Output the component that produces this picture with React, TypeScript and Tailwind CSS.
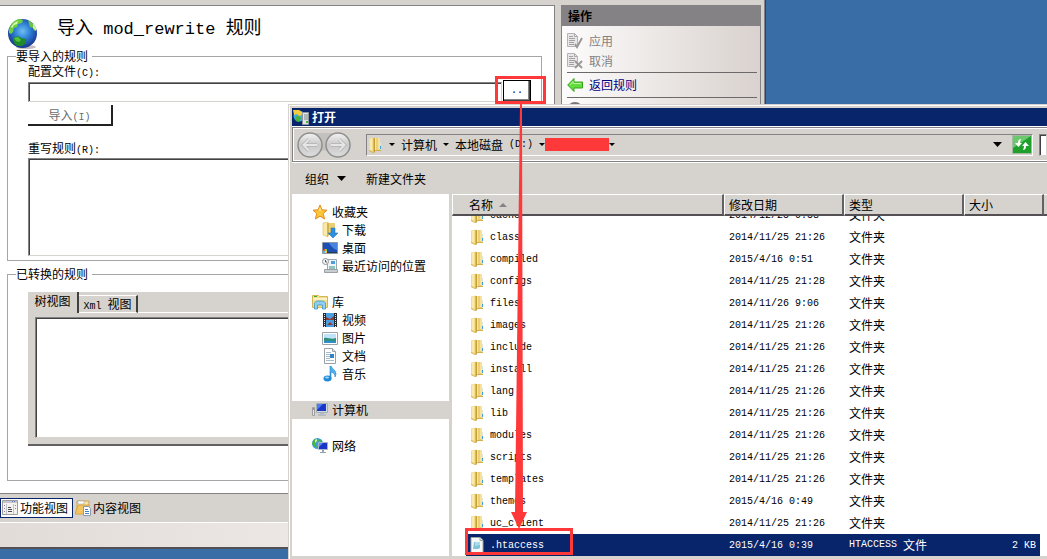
import React from 'react';
import clsx from 'clsx';

const MONO = "font-['Liberation_Mono','Noto_Sans_CJK_SC',monospace]";

const SUNKEN =
  'border border-t-[#848284] border-l-[#848284] border-r-[#d6d3ce] border-b-[#d6d3ce] shadow-[inset_1px_1px_0_#424142]';

interface FileRow {
  name: string;
  date: string;
  selected?: boolean;
}

const FILES: FileRow[] = [
  { name: 'cache', date: '2014/12/25 0:58' },
  { name: 'class', date: '2014/11/25 21:26' },
  { name: 'compiled', date: '2015/4/16 0:51' },
  { name: 'configs', date: '2014/11/25 21:28' },
  { name: 'files', date: '2014/11/26 9:06' },
  { name: 'images', date: '2014/11/25 21:26' },
  { name: 'include', date: '2014/11/25 21:26' },
  { name: 'install', date: '2014/11/25 21:26' },
  { name: 'lang', date: '2014/11/25 21:26' },
  { name: 'lib', date: '2014/11/25 21:26' },
  { name: 'modules', date: '2014/11/25 21:26' },
  { name: 'scripts', date: '2014/11/25 21:26' },
  { name: 'templates', date: '2014/11/25 21:26' },
  { name: 'themes', date: '2015/4/16 0:49' },
  { name: 'uc_client', date: '2014/11/25 21:26' },
  { name: '.htaccess', date: '2015/4/16 0:39', selected: true },
];

// Latin text is set smaller so that two letters fill one Chinese character
const Latin: React.FC<{ children: React.ReactNode }> = ({ children }) => (
  <span className={clsx(MONO, 'text-[10px] leading-none whitespace-pre')}>{children}</span>
);

const Caret: React.FC<{ big?: boolean }> = ({ big }) => (
  <svg width={big ? 9 : 6} height={big ? 5 : 3} viewBox="0 0 8 4" preserveAspectRatio="none" className="shrink-0">
    <path d="M0 0h8L4 4z" fill="#000" />
  </svg>
);

/* ---------- Icons ---------- */

const GlobeIcon = () => (
  <svg width="30" height="32" viewBox="0 0 30 32" className="shrink-0">
    <defs>
      <radialGradient id="sea" cx="0.5" cy="0.42" r="0.6">
        <stop offset="0" stopColor="#6fbff2" />
        <stop offset="0.45" stopColor="#2f7fd6" />
        <stop offset="1" stopColor="#152f86" />
      </radialGradient>
    </defs>
    <ellipse cx="18" cy="29" rx="10" ry="2" fill="#c4bebe" />
    <circle cx="14.5" cy="15.5" r="14.5" fill="url(#sea)" />
    <path d="M1 12C2 7 6 2 11 1l4 1-1 3-4 1-1 3-3 1-1 4-2 2-2-1z" fill="#6ccf3e" />
    <path d="M3 9l3-4 4-2-1 3-3 1-2 3z" fill="#e2f8b0" />
    <path d="M20 2c4 2 7 5 8 9l-2 2-1-3-3-1-1-3z" fill="#6cc04b" />
    <path d="M25 5l3 5 0 3-3-3z" fill="#d5f59a" />
    <path d="M5 20l5-2 3 2 5 1 0 4-4 3-5 0-3-3z" fill="#1f8a2c" />
    <path d="M6 20l4-1 3 3-2 2-3-1z" fill="#55c23e" />
  </svg>
);

const FolderIcon = () => (
  <svg width="14" height="16" viewBox="0 0 14 16" className="shrink-0">
    <path d="M1 1.500L6 .5v15l-5-2z" fill="#f3dc8b" />
    <path d="M2 2l2-.5v12l-2-.5z" fill="#f9eab0" />
    <path d="M7 1h5v11l1 1v1H7z" fill="#ecd077" />
    <path d="M10 1h2v11h-2z" fill="#f6e29a" />
    <path d="M5 1h1v15H5z" fill="#dcbc55" />
    <path d="M6 1h1v14l-1 1z" fill="#c69e38" />
    <path d="M7 1h1v12H7z" fill="#f6e6a4" />
    <path d="M1 13l4 2v1l-4-2zM7 13h6v1H7z" fill="#d3b04c" />
    <path d="M12 5h1v8h-1z" fill="#dfe6d6" />
    <path d="M12 9h1v3h-1z" fill="#3f9fe0" />
  </svg>
);

const NotepadIcon = () => (
  <svg width="14" height="16" viewBox="0 0 14 16" className="shrink-0">
    <path d="M1 .5h9l3 3v12H1z" fill="#f6f8f8" stroke="#9aa5a8" />
    <path d="M10 .5v3h3" fill="#dfe5e7" stroke="#9aa5a8" />
    <path d="M4 5h6v6l-2 1H3z" fill="#7fc4d8" />
    <path d="M5 5h5v3l-5 1z" fill="#a9dcea" />
  </svg>
);

const StarIcon = () => (
  <svg width="16" height="16" viewBox="0 0 16 16">
    <path d="M8 1l2 4.800 5 .4-3.800 3.300L12.600 15 8 12.200 3.400 15l1.300-5.500L1 6.200l5-.4z" fill="#fbc638" stroke="#e58a1c" />
    <path d="M8 3l1.300 3.600H6.500z" fill="#ffeb9a" />
  </svg>
);

const DownloadIcon = () => (
  <svg width="16" height="16" viewBox="0 0 16 16">
    <path d="M6 1h7v12H6z" fill="#e9cf75" />
    <path d="M1 1l5-1v15l-5-2z" fill="#fbe9a6" stroke="#d8bb62" strokeWidth="0.6" />
    <path d="M5 1h2v12l-2 2z" fill="#d7b24c" />
    <path d="M9 6h4v5h3l-5 5-5-5h3z" fill="#2c8fe0" stroke="#1b6bb5" strokeWidth="0.5" />
  </svg>
);

const DesktopIcon = () => (
  <svg width="16" height="16" viewBox="0 0 16 16">
    <path d="M.5 2.500h15v11H.5z" fill="#1b4fb4" stroke="#8b97a5" />
    <path d="M7 3h8v7C11 9 9 6 7 3z" fill="#4784e0" />
    <path d="M1 12h14v1H1z" fill="#2c3a50" />
    <path d="M2 9h1v2H1z" fill="#f05a28" />
    <path d="M3 9h2v2H3z" fill="#8ccf3c" />
    <path d="M1 11h2v2H1z" fill="#57b6f2" />
    <path d="M3 11h2v2H3z" fill="#fbd13a" />
  </svg>
);

const RecentIcon = () => (
  <svg width="16" height="16" viewBox="0 0 16 16">
    <path d="M5.500 1.500h9v10h-9z" fill="#eef4f8" stroke="#9aa5ad" />
    <path d="M9 3h4v3H9z" fill="#4a9fdc" />
    <path d="M7 8h6v3H7z" fill="#8ec5c0" />
    <path d="M2.500 11.500h13v3h-13z" fill="#c9cdd0" stroke="#9aa0a4" />
    <circle cx="3.500" cy="3.500" r="3" fill="#f4f4f4" stroke="#8f969c" />
    <path d="M3.500 2v2H5" stroke="#555" fill="none" />
  </svg>
);

const LibraryIcon = () => (
  <svg width="16" height="16" viewBox="0 0 16 16">
    <path d="M.5 1.500h6l1 1h8v11H.5z" fill="#f5df8c" stroke="#d4b555" />
    <path d="M2 2h3v1H2z" fill="#3daf36" />
    <path d="M1 4h14v2H1z" fill="#fdf2c2" />
    <path d="M2.500 15V9l2-2h7l2 2v6h-3v-4h-5v4z" fill="#8fd0f2" stroke="#3f95cc" strokeWidth="0.8" />
  </svg>
);

const VideoIcon = () => (
  <svg width="16" height="16" viewBox="0 0 16 16">
    <path d="M1 1h14v14H1z" fill="#26292d" />
    <path d="M4 1h8v6H4zM4 8h8v7H4z" fill="#4b9fe0" />
    <path d="M4 5l4 2 4-3v4H4zM5 13l3-3 3 3z" fill="#8b3a34" />
    <path d="M2.500 2v13M13.500 2v13" stroke="#e8e8e8" strokeDasharray="1 1" />
  </svg>
);

const PictureIcon = () => (
  <svg width="16" height="16" viewBox="0 0 16 16">
    <path d="M.5 2.500h15v12H.5z" fill="#fff" stroke="#9ba3a8" />
    <path d="M2 4h12v9H2z" fill="#bfe4f7" />
    <path d="M2 8c4-1 7 2 12 0v3H2z" fill="#2f8e7c" />
    <path d="M2 11h12v2H2z" fill="#2b8fc8" />
  </svg>
);

const DocumentIcon = () => (
  <svg width="16" height="16" viewBox="0 0 16 16">
    <path d="M2.500.5h8l3 3v12h-11z" fill="#fff" stroke="#98a1a8" />
    <path d="M10.500.5v3h3" fill="#dde5ea" stroke="#98a1a8" />
    <path d="M4 4.500h5M4 6.500h4M4 8.500h4M4 10.500h4M4 12.500h8" stroke="#a9bac8" />
    <path d="M8 6h4v4H8z" fill="#2f83c8" />
  </svg>
);

const MusicIcon = () => (
  <svg width="16" height="16" viewBox="0 0 16 16">
    <path d="M8 0h1c1 3 5 4 5 8l-1 3c0-3-1-4-4-5v7H8z" fill="#4db1ee" stroke="#1f7fc4" strokeWidth="0.6" />
    <ellipse cx="5.500" cy="12.500" rx="4" ry="3" fill="#2389d6" />
    <ellipse cx="5" cy="11.500" rx="2" ry="1" fill="#9ed8fa" />
  </svg>
);

const ComputerIcon = () => (
  <svg width="16" height="16" viewBox="0 0 16 16">
    <path d="M4.500 1.500h11v9h-11z" fill="#d3dbe2" stroke="#a4aeb8" />
    <path d="M5 2h9v7H5z" fill="#1a35c8" />
    <path d="M5 2h6L5 8z" fill="#4f7cf0" />
    <path d="M8 11h4v1h2v2H6v-2h2z" fill="#b4bcc4" />
    <path d="M.5 5.500h2v8h-2z" fill="#e7e7e7" stroke="#9e9e9e" />
    <path d="M1 6h1v2H1z" fill="#4ac23a" />
  </svg>
);

const NetworkIcon = () => (
  <svg width="16" height="16" viewBox="0 0 16 16">
    <circle cx="5.500" cy="5.500" r="5.500" fill="#3d9fe0" />
    <path d="M1 3l2-2 3 0-1 2-2 3 2 3-1 1-4-4zM7 1l3 2-1 1-3-1z" fill="#48b637" />
    <path d="M3 2l2-1v2L3 5z" fill="#d7f3a8" />
    <path d="M6.500 4.500h9v7h-9z" fill="#1a35c8" stroke="#a7b6cc" />
    <path d="M7 5h4l-4 4z" fill="#5a8af0" />
    <path d="M10 12h2v2h2v1H8v-1h2z" fill="#97a2ad" />
  </svg>
);

const AppIcon = () => (
  <svg width="17" height="16" viewBox="0 0 17 16" className="shrink-0">
    <circle cx="6" cy="7" r="5.500" fill="#3caee0" />
    <path d="M2 9l3-3 3 3-2 4-3-1z" fill="#49b33c" />
    <path d="M0 1h6l3 2v3L6 7 4 5 1 6z" fill="#f5cc3c" />
    <path d="M9.500 3.500h6v12h-6z" fill="#dfe3e6" stroke="#8f979e" />
    <path d="M11 6h4M11 8h4M11 10h4" stroke="#7d8890" />
    <path d="M13 12h2v2h-2z" fill="#49b33c" />
  </svg>
);

const ActionDoc: React.FC<{ mark: string }> = ({ mark }) => (
  <svg width="16" height="16" viewBox="0 0 16 16" className="shrink-0">
    <path d="M.5.5h7l3 3v10H.5z" fill="#e9e7e7" stroke="#b5b3b3" />
    <path d="M7.500.5v3h3" fill="none" stroke="#a9a7a7" />
    <path d="M2 3.500h4M2 5.500h6M2 7.500h6M2 9.500h5M2 11.500h5" stroke="#a3a1a1" />
    <path d={mark} fill="none" stroke="#9b999a" strokeWidth="2" />
  </svg>
);

const BackArrow = () => (
  <svg width="16" height="16" viewBox="0 0 16 16" className="shrink-0">
    <path d="M.7 8L7 1.500V5h8.500v6H7v3.500z" fill="#62dc3a" stroke="#37a51f" />
    <path d="M3 8l3-3.500V6.500h8" fill="none" stroke="#b4f59a" />
  </svg>
);

const FeaturesIcon = () => (
  <svg width="16" height="16" viewBox="0 0 16 16" className="shrink-0">
    <path d="M.5.5h15v14H.5z" fill="#f4f2f0" stroke="#a09da0" />
    <path d="M1 1h14v2H1z" fill="#c6c6cc" />
    <path d="M10 1.500h4" stroke="#5d7fc0" strokeDasharray="1 1" />
    <path d="M4.500 4v10M11.500 4v10" stroke="#c5c2c5" />
    <path d="M2 5.500h1M2 8.500h1M2 11.500h1M13 5.500h1M13 8.500h1" stroke="#8a86a8" />
    <path d="M6 7.500h3M6 9.500h4M6 11.500h4" stroke="#4c4c4c" />
  </svg>
);

const ContentIcon = () => (
  <svg width="16" height="16" viewBox="0 0 16 16" className="shrink-0">
    <path d="M2 1h12v9H2z" fill="#f4e3b0" stroke="#c9a555" />
    <path d="M3 1h6v3H3z" fill="#fff" stroke="#999" strokeWidth="0.5" />
    <path d="M0 14l3-9h11l-2 9z" fill="#f3c561" stroke="#cf9c37" strokeWidth="0.8" />
    <path d="M8.500 6.500h5l2 2v7h-7z" fill="#fff" stroke="#8d99a8" />
    <path d="M10 9.500h3M10 11.500h4M10 13.500h4" stroke="#3f83d0" />
  </svg>
);

const NavArrows = () => (
  <svg width="56" height="28" viewBox="0 0 56 28" className="shrink-0">
    <defs>
      <linearGradient id="disc" x1="0" y1="0" x2="0" y2="1">
        <stop offset="0" stopColor="#f3f3f3" />
        <stop offset="0.5" stopColor="#c9c9c9" />
        <stop offset="1" stopColor="#dedede" />
      </linearGradient>
    </defs>
    <path d="M14 2h28v20q-14-5-28 0z" fill="#c3c1be" />
    <circle cx="14" cy="14" r="12" fill="url(#disc)" stroke="#8f8f8f" strokeWidth="1.5" />
    <circle cx="42" cy="14" r="12" fill="url(#disc)" stroke="#8f8f8f" strokeWidth="1.5" />
    <path d="M21 14H8M13 8.500L7.500 14l5.500 5.500M35 14h13M43 8.500l5.500 5.500-5.500 5.500" fill="none" stroke="#b2b2b2" strokeWidth="3.5" />
    <path d="M21 14H8M13 8.500L7.500 14l5.500 5.500M35 14h13M43 8.500l5.500 5.500-5.500 5.500" fill="none" stroke="#e6e6e6" strokeWidth="2" />
  </svg>
);

const RefreshIcon = () => (
  <svg width="20" height="19" viewBox="0 0 20 19">
    <path d="M.5.5h19v18H.5z" fill="#1fa02a" stroke="#a7b8a5" />
    <path d="M1 1h18L1 13z" fill="#6cc86c" />
    <path d="M9 4Q6 4 6 8H3l3.500 4L10 8H8q0-2 1-4zM11 15q3 0 3-4h3l-3.500-4L10 11h2q0 2-1 4z" fill="#fff" />
  </svg>
);

/* ---------- Manager window ---------- */

const RulesForm = () => (
  <div className="flex-1 bg-white border-r border-[#848284] pr-3 pl-[7px]">
    <header className="flex items-start h-[43px] pt-3 pl-px gap-[19px]">
      <GlobeIcon />
      <h1 className="text-[18px] leading-4">
        导入<span className={clsx(MONO, 'text-[17px] leading-none whitespace-pre')}> mod_rewrite </span>规则
      </h1>
    </header>

    <fieldset className="border border-[#a5a5a5] px-2 pb-1">
      <legend className="leading-[14px] pr-1">要导入的规则</legend>
      <div className="pl-3 pr-[2px]">
        <label htmlFor="config" className="block leading-4 pb-px">
          配置文件<Latin>(C):</Latin>
        </label>
        <div className="flex items-end gap-px">
          <input id="config" type="text" className={clsx('flex-1 min-w-0 h-5 px-1', SUNKEN)} />
          <button
            type="button"
            className={clsx(
              MONO,
              'w-7 h-[22px] border border-black bg-white text-[10px] leading-4 shadow-[inset_-1px_-1px_0_#424142,inset_-2px_-2px_0_#848284]'
            )}
          >
            ..
          </button>
        </div>
        <button
          type="button"
          className="block mt-[3px] w-[85px] h-[21px] leading-4 text-[#6b6b6b] border-r-2 border-b-2 border-[#222]"
        >
          导入<Latin>(I)</Latin>
        </button>
        <label htmlFor="rules" className="block mt-[14px] mb-[2px] leading-4">
          重写规则<Latin>(R):</Latin>
        </label>
        <textarea id="rules" className={clsx('block w-full h-[98px] resize-none', SUNKEN)} />
      </div>
    </fieldset>

    <fieldset className="mt-[6px] border border-[#a5a5a5] px-2 pb-[34px]">
      <legend className="leading-[14px] pr-1">已转换的规则</legend>
      <div className="mt-[11px] ml-3 mr-[2px] bg-[#d6d3ce] border-b-2 border-[#636163]">
        <div role="tablist" className="flex items-end h-[21px]">
          <button role="tab" aria-selected="true" className="h-[21px] w-[51px] leading-4 pb-1 border-r-2 border-[#424142]">
            树视图
          </button>
          <button
            role="tab"
            aria-selected="false"
            className="h-[18px] w-[59px] leading-4 border-t border-t-white border-b border-b-white border-r-2 border-r-[#424142]"
          >
            <Latin>Xml </Latin>视图
          </button>
          <div className="flex-1 border-b border-white" />
        </div>
        <div className="px-[7px] pt-1 pb-[6px]">
          <div role="tabpanel" className={clsx('h-[121px] bg-white', SUNKEN)} />
        </div>
      </div>
    </fieldset>
  </div>
);

const ActionsPane = () => (
  <aside className="w-[200px] border-x border-[#848284] bg-linear-to-r from-[#fdfcfc] to-[#d9d2ce]">
    <h2 className="h-[21px] pl-[6px] leading-[22px] font-bold bg-[#848284]">操作</h2>
    <div className="pt-[5px] pl-[5px] pr-[3px]">
      <button type="button" disabled className="flex items-center gap-[6px] h-5 leading-4 text-[#848284]">
        <ActionDoc mark="M8 11l2 3 5-9" />
        应用
      </button>
      <button type="button" disabled className="flex items-center gap-[6px] h-5 leading-4 text-[#848284]">
        <ActionDoc mark="M8 8l7 7M15 8l-7 7" />
        取消
      </button>
      <hr className="mt-px border-[#6b6969]" />
      <a href="#rules" className="flex items-center gap-[6px] h-6 leading-4 text-[#000084]">
        <BackArrow />
        返回规则
      </a>
      <hr className="border-[#6b6969]" />
      <svg width="16" height="16" viewBox="0 0 16 16" className="mt-1">
        <circle cx="8" cy="8" r="7" fill="#d8d8d8" stroke="#777" strokeWidth="2" />
      </svg>
    </div>
  </aside>
);

const ManagerWindow = () => (
  <main className="flex flex-col h-full mr-[281px] bg-[#d6d3ce] border-r border-[#424142] shadow-[inset_-1px_0_0_#848284]">
    <div className="flex flex-1 mt-[5px] pr-1 gap-[6px]">
      <div className="flex flex-1 border-t border-[#848284]">
        <RulesForm />
      </div>
      <ActionsPane />
    </div>
    <div className="flex items-center h-[30px] gap-[2px] border-t border-[#848284] border-b border-b-white">
      <button type="button" className="flex items-center gap-[2px] h-5 pl-px pr-1 leading-4 bg-white border border-[#08246b]">
        <FeaturesIcon />
        功能视图
      </button>
      <button type="button" className="flex items-center gap-[2px] h-5 leading-4">
        <ContentIcon />
        内容视图
      </button>
    </div>
    <div className="h-[26px] border-b-2 border-[#525052] bg-linear-to-r from-[#e2dcd8] to-[#fbf9f9]" />
  </main>
);

/* ---------- Open dialog ---------- */

interface PlaceProps {
  icon: React.ReactNode;
  label: string;
  child?: boolean;
  selected?: boolean;
}

const Place: React.FC<PlaceProps> = ({ icon, label, child, selected }) => (
  <li>
    <a
      href="#files"
      className={clsx('flex items-center gap-1 h-[18px] leading-4', child ? 'pl-[30px]' : 'pl-5', selected && 'bg-[#d6d3ce]')}
    >
      {icon}
      {label}
    </a>
  </li>
);

const Places = () => (
  <nav className="w-[157px] shrink-0 pt-[9px] flex flex-col gap-[18px] bg-white">
    <ul>
      <Place icon={<StarIcon />} label="收藏夹" />
      <Place icon={<DownloadIcon />} label="下载" child />
      <Place icon={<DesktopIcon />} label="桌面" child />
      <Place icon={<RecentIcon />} label="最近访问的位置" child />
    </ul>
    <ul>
      <Place icon={<LibraryIcon />} label="库" />
      <Place icon={<VideoIcon />} label="视频" child />
      <Place icon={<PictureIcon />} label="图片" child />
      <Place icon={<DocumentIcon />} label="文档" child />
      <Place icon={<MusicIcon />} label="音乐" child />
    </ul>
    <ul>
      <Place icon={<ComputerIcon />} label="计算机" selected />
    </ul>
    <ul>
      <Place icon={<NetworkIcon />} label="网络" />
    </ul>
  </nav>
);

const HEAD_CELL =
  'flex items-center gap-[6px] shrink-0 border-t border-t-white border-l border-l-white border-r-2 border-r-[#636163] border-b-2 border-b-[#525052]';

const FileList = () => (
  <div className="flex-1 min-w-0 flex flex-col overflow-hidden bg-white">
    <div className="flex h-[22px] shrink-0 leading-4 bg-[#d6d3ce]">
      <button type="button" className={clsx(HEAD_CELL, 'w-[272px] pl-4')}>
        名称
        <svg width="8" height="4" viewBox="0 0 8 4">
          <path d="M4 0l4 4H0z" fill="#848284" />
        </svg>
      </button>
      <button type="button" className={clsx(HEAD_CELL, 'w-[120px] pl-1')}>修改日期</button>
      <button type="button" className={clsx(HEAD_CELL, 'w-[120px] pl-1')}>类型</button>
      <button type="button" className={clsx(HEAD_CELL, 'w-20 pl-1')}>大小</button>
      <div className="flex-1 border-t border-t-white border-b-2 border-b-[#525052]" />
    </div>
    {/* list is scrolled to the end, so the first row is cut by the header */}
    <div id="files" className="flex-1 min-h-0 flex flex-col justify-end overflow-hidden">
      <table className="ml-[14px] w-[574px] table-fixed border-collapse">
        <colgroup>
          <col className="w-[258px]" />
          <col className="w-[120px]" />
          <col className="w-[120px]" />
          <col className="w-[76px]" />
        </colgroup>
        <tbody>
          {FILES.map((file) => (
            <tr key={file.name} className={clsx('h-[22px] leading-4', file.selected && 'bg-[#08246b] text-white')}>
              <td className="p-0 pl-1">
                <div className="flex items-center gap-[6px]">
                  {file.selected ? <NotepadIcon /> : <FolderIcon />}
                  <span className={clsx(MONO, 'pt-[2px] text-[10px]')}>{file.name}</span>
                </div>
              </td>
              <td className={clsx(MONO, 'p-0 pt-[2px] pl-[5px] text-[10px]')}>{file.date}</td>
              <td className="p-0 pl-[5px]">
                {file.selected ? (
                  <div className="flex items-center">
                    <Latin>HTACCESS </Latin>文件
                  </div>
                ) : (
                  '文件夹'
                )}
              </td>
              <td className={clsx(MONO, 'p-0 pt-[2px] pr-1 text-[10px] text-right')}>{file.selected && '2 KB'}</td>
            </tr>
          ))}
        </tbody>
      </table>
    </div>
  </div>
);

const AddressBar = () => (
  <div className="flex items-center h-[35px] pl-[3px] border-y border-l border-[#848284] shadow-[inset_1px_1px_0_#fff,inset_0_-1px_0_#fff]">
    <NavArrows />
    <div className="ml-[14px] mr-[6px] flex-1 flex items-center h-[22px] pl-px leading-4 border border-t-[#848284] border-l-[#848284] border-r-white border-b-white">
      <FolderIcon />
      <div className="flex items-center gap-[6px] pl-[7px]">
        <Caret />
        <span>计算机</span>
        <Caret />
        <span className="flex items-center">
          本地磁盘<Latin> (D:)</Latin>
        </span>
        <Caret />
      </div>
      <div className="w-16 h-[13px] bg-[#ff3839]" />
      <Caret />
      <button type="button" aria-label="上一个位置" className="ml-auto mr-[10px] h-full">
        <Caret big />
      </button>
      <button type="button" aria-label="刷新">
        <RefreshIcon />
      </button>
    </div>
    <input type="search" aria-label="搜索" className={clsx('w-2 h-[22px] bg-white', SUNKEN)} />
  </div>
);

const OpenDialog = () => (
  <section
    role="dialog"
    aria-labelledby="dialog-title"
    className="absolute left-[288px] top-[104px] right-0 bottom-0 flex flex-col bg-[#d6d3ce] border-t border-l border-[#d6d3ce] pl-[3px] pt-[3px] pb-[3px] shadow-[inset_1px_1px_0_#fff]"
  >
    <div className="flex items-center gap-[2px] h-[18px] pl-px bg-[#08246b] text-white">
      <AppIcon />
      <h2 id="dialog-title" className="font-bold leading-4">打开</h2>
    </div>
    <div className="border-t border-white">
      <AddressBar />
    </div>
    <div className="flex items-center h-8 pl-[13px] leading-4 border-t border-white">
      <button type="button" className="flex items-center gap-2">
        组织 <Caret big />
      </button>
      <button type="button" className="ml-5">新建文件夹</button>
    </div>
    <div className="flex flex-1 min-h-0 gap-[3px]">
      <Places />
      <FileList />
    </div>
  </section>
);

/* ---------- Red marks over both windows ---------- */

const Marks = () => (
  <div className="pointer-events-none">
    <div className="absolute left-[495px] top-[76px] w-[51px] h-7 border-3 border-[#ff3839]" />
    <div className="absolute left-[465px] top-[528px] w-[108px] h-[27px] border-3 border-[#ff3839]" />
    <svg width="18" height="426" viewBox="0 0 18 426" className="absolute left-[510px] top-[103px]">
      <path d="M10 0h2l1 409h4L9 426 1 409h4z" fill="#ff3839" />
    </svg>
  </div>
);

const App: React.FC = () => (
  <div className="relative h-screen overflow-hidden bg-[#396da5] pb-[10px] font-['Noto_Sans_CJK_SC',sans-serif] text-[12px] text-black">
    <ManagerWindow />
    <OpenDialog />
    <Marks />
  </div>
);

export default App;
